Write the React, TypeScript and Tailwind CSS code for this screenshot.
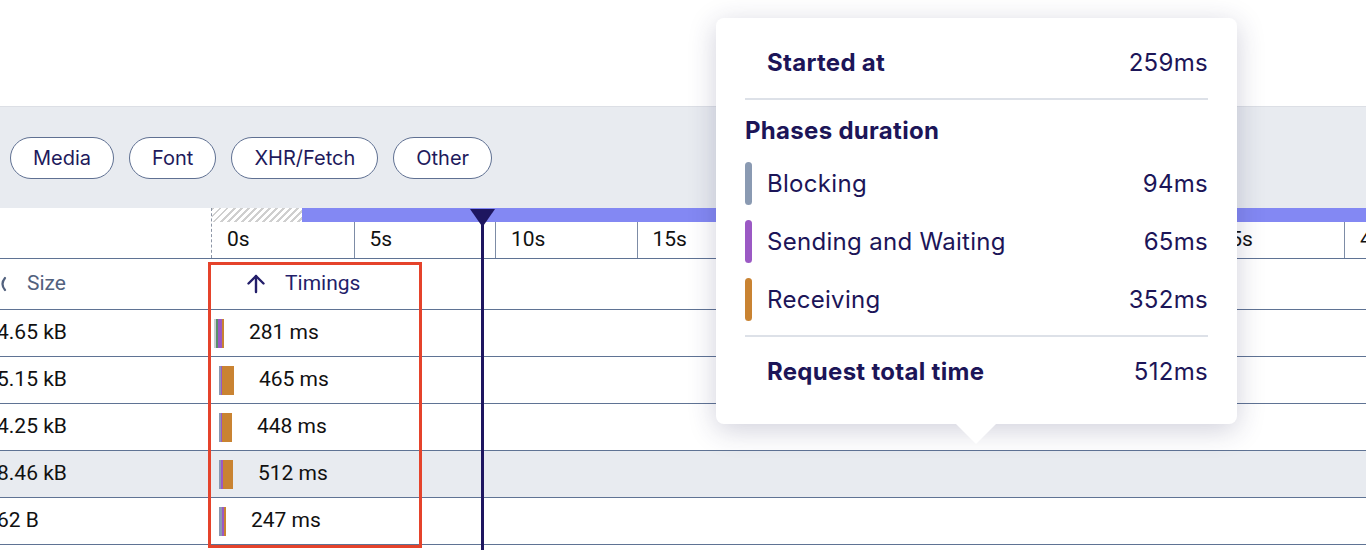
import React from 'react';

const pills = ['Media', 'Font', 'XHR/Fetch', 'Other'];
const ticks = ['0s', '5s', '10s', '15s', '20s', '25s', '30s', '35s', '40s', '45s'];

interface Row {
  size: string;
  time: string;
  offset: number;
  phases: [string, number][];
  highlight?: boolean;
}

const rows: Row[] = [
  { size: '4.65 kB', time: '281 ms', offset: 3, phases: [['#c9ccd4', 2], ['#5a8f6a', 2], ['#9b59c4', 4], ['#c98332', 2]] },
  { size: '5.15 kB', time: '465 ms', offset: 8, phases: [['#8a9ab2', 2], ['#9b59c4', 1], ['#c98332', 12]] },
  { size: '4.25 kB', time: '448 ms', offset: 8, phases: [['#8a9ab2', 2], ['#9b59c4', 1], ['#c98332', 10]] },
  { size: '8.46 kB', time: '512 ms', offset: 8, phases: [['#8a9ab2', 2], ['#9b59c4', 2], ['#c98332', 10]], highlight: true },
  { size: '62 B', time: '247 ms', offset: 8, phases: [['#8a9ab2', 3], ['#9b59c4', 2], ['#c98332', 2]] },
];

const phases = [
  { label: 'Blocking', value: '94ms', color: 'bg-[#8a9ab2]' },
  { label: 'Sending and Waiting', value: '65ms', color: 'bg-[#9b59c4]' },
  { label: 'Receiving', value: '352ms', color: 'bg-[#c98332]' },
];

const Tooltip: React.FC = () => (
  <div className="absolute left-[716px] top-[18px] w-[521px] h-[406px] bg-white rounded-lg shadow-[0_6px_28px_rgba(40,40,90,0.22)] px-[29px] text-[#1c1558] font-['Inter',sans-serif] text-[24px] tracking-[0.3px]">
    <div className="flex justify-between items-center h-[80px] pt-[10px] pl-[22px]">
      <span className="font-bold">Started at</span>
      <span>259ms</span>
    </div>
    <div className="h-[2px] bg-[#dde1e8]" />
    <div className="h-[62px] flex items-center font-bold">Phases duration</div>
    <div className="flex flex-col gap-[15px]">
      {phases.map((p) => (
        <div key={p.label} className="flex items-center h-[43px]">
          <div className={`w-[7px] h-full rounded-full ${p.color}`} />
          <span className="ml-[15px] flex-1">{p.label}</span>
          <span>{p.value}</span>
        </div>
      ))}
    </div>
    <div className="h-[2px] bg-[#dde1e8] mt-[14px]" />
    <div className="flex justify-between items-center h-[70px] pl-[22px]">
      <span className="font-bold">Request total time</span>
      <span>512ms</span>
    </div>
    <svg className="absolute left-[239px] -bottom-[21px]" width="42" height="22" viewBox="0 0 42 22">
      <path d="M0 0 L21 21 L42 0 Z" fill="#fff" />
    </svg>
  </div>
);

export default function App() {
  return (
    <div className="relative w-[1366px] h-[550px] overflow-hidden bg-white font-['Roboto',sans-serif]">
      <div className="h-[106px]" />

      {/* filter band */}
      <div className="h-[102px] bg-[#e8ebf0] border-t border-[#dcdfe5] flex items-center gap-[15px] pl-[10px] font-['Inter',sans-serif]">
        {pills.map((p) => (
          <div key={p} className="h-[42px] px-[22px] flex items-center rounded-full border border-[#5f7092] bg-white text-[20px] text-[#1e1a5c]">
            {p}
          </div>
        ))}
      </div>

      {/* timeline ruler */}
      <div className="h-[51px] flex border-b border-[#5f7394]">
        <div className="w-[211px] shrink-0" />
        <div className="flex-1 flex flex-col border-l border-dashed border-[#8d96a6]">
          <div className="h-[14px] flex">
            <div className="w-[90px] bg-[repeating-linear-gradient(135deg,#cfcfcf_0_2px,transparent_2px_5px)]" />
            <div className="flex-1 bg-[#8388f3]" />
          </div>
          <div className="flex-1 flex">
            {ticks.map((t, i) => (
              <div
                key={t}
                className={`w-[141.5px] shrink-0 flex items-center pl-[15px] text-[21px] text-[#111] ${i === 0 ? '' : 'border-l border-[#7d8ca6]'}`}
              >
                {t}
              </div>
            ))}
          </div>
        </div>
      </div>

      {/* header */}
      <div className="h-[51px] flex items-center border-b border-[#5f7394]">
        <div className="w-[211px] shrink-0 flex items-center text-[21px] text-[#52617e]">
          <svg width="20" height="20" viewBox="0 0 20 20" className="-ml-[12px]" fill="none" stroke="#52617e" strokeWidth="2.2" strokeLinecap="round" strokeLinejoin="round">
            <path d="M17 4 Q12 10 17 16" />
          </svg>
          <span className="ml-[19px]">Size</span>
        </div>
        <div className="flex items-center pl-[34px] text-[21px] text-[#231e6a]">
          <svg width="22" height="22" viewBox="0 0 22 22" fill="none" stroke="#231e6a" strokeWidth="2.4" strokeLinecap="round" strokeLinejoin="round">
            <path d="M11 19 V3" />
            <path d="M3.5 10.5 L11 3 L18.5 10.5" />
          </svg>
          <span className="ml-[18px]">Timings</span>
        </div>
      </div>

      {/* rows */}
      {rows.map((r) => (
        <div key={r.size} className={`h-[47px] flex items-center border-b border-[#5f7394] ${r.highlight ? 'bg-[#e8ebf0]' : ''}`}>
          <div className="w-[211px] shrink-0 -ml-[3px] mr-[3px] text-[21px] text-[#111]">{r.size}</div>
          <div className="flex items-center">
            <div className="flex h-[29px]" style={{ marginLeft: r.offset }}>
              {r.phases.map(([c, w], i) => (
                <div key={i} style={{ width: w, backgroundColor: c }} />
              ))}
            </div>
            <span className="ml-[25px] text-[21px] text-[#111]">{r.time}</span>
          </div>
        </div>
      ))}

      {/* current time marker */}
      <div className="absolute left-[481px] top-[209px] bottom-0 w-[3px] bg-[#1e1660]" />
      <svg className="absolute left-[470px] top-[209px]" width="25" height="18" viewBox="0 0 25 18">
        <path d="M0 0 H25 L12.5 18 Z" fill="#1e1660" />
      </svg>

      {/* annotation */}
      <div className="absolute left-[208px] top-[262px] w-[214px] h-[286px] border-[3px] border-[#e5432b]" />

      <Tooltip />
    </div>
  );
}
